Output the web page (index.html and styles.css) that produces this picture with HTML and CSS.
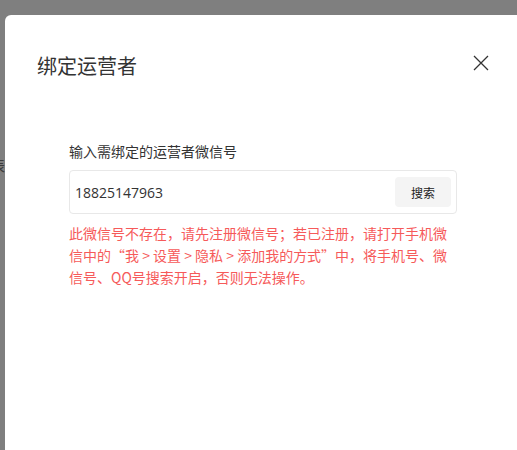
FILE: index.html
```html
<!DOCTYPE html>
<html>
  <head>
    <title>绑定运营者</title>
    <link rel="stylesheet" href="styles.css">
  </head>
  <body>
    <div class="page-edge">
      <span>列表</span>
    </div>

    <div class="modal">
      <div class="modal-header">
        <h2 class="modal-title">绑定运营者</h2>
        <button class="modal-close" aria-label="关闭">
          <svg width="16" height="16" viewBox="0 0 16 16">
            <path d="M1 1 L15 15 M15 1 L1 15" stroke="#333" stroke-width="1.3" fill="none"/>
          </svg>
        </button>
      </div>

      <div class="modal-body">
        <label class="field-label" for="wx-id">输入需绑定的运营者微信号</label>
        <div class="search-box">
          <input id="wx-id" class="search-input" type="text" value="18825147963">
          <button class="search-btn">搜索</button>
        </div>
        <p class="error-msg">此微信号不存在，请先注册微信号；若已注册，请打开手机微信中的“我 &gt; 设置 &gt; 隐私 &gt; 添加我的方式”中，将手机号、微信号、QQ号搜索开启，否则无法操作。</p>
      </div>
    </div>
  </body>
</html>
```

FILE: styles.css
```css
html, body {
  margin: 0;
  height: 100%;
  overflow: hidden;
}

body {
  display: flex;
  background: #7f7f7f;
  font-family: "Noto Sans CJK SC", "Noto Sans", sans-serif;
  color: #333;
}

/* page behind the mask, only a sliver shows */
.page-edge {
  width: 5px;
  flex: none;
  display: flex;
  justify-content: flex-end;
  overflow: hidden;
  padding-top: 155px;
  font-size: 14px;
  line-height: 20px;
  color: #3c3c3c;
  white-space: nowrap;
}

.modal {
  flex: none;
  width: 540px;
  margin-top: 15px;
  background: #fff;
  border-radius: 6px 6px 0 0;
}

.modal-header {
  display: flex;
  align-items: center;
  justify-content: space-between;
  width: 452px;
  padding: 37px 0 0 32px;
}

.modal-title {
  margin: 0;
  font-size: 20px;
  font-weight: normal;
  line-height: 28px;
  color: #333;
}

.modal-close {
  display: flex;
  padding: 0;
  margin-top: -6px;
  border: none;
  background: none;
  cursor: pointer;
}

.modal-body {
  padding: 61px 0 0 64px;
}

.field-label {
  display: block;
  font-size: 14px;
  line-height: 20px;
  color: #333;
}

.search-box {
  display: flex;
  align-items: center;
  width: 376px;
  margin-top: 9px;
  padding: 6px 5px;
  border: 1px solid #e8e8e8;
  border-radius: 4px;
}

.search-input {
  flex: 1;
  min-width: 0;
  padding: 0;
  border: none;
  outline: none;
  font-family: "Open Sans", "Noto Sans CJK SC", sans-serif;
  font-size: 14px;
  color: #333;
  background: transparent;
}

.search-btn {
  width: 56px;
  height: 30px;
  border: none;
  border-radius: 4px;
  background: #f4f4f4;
  font-family: inherit;
  font-size: 12px;
  color: #222;
  cursor: pointer;
}

.error-msg {
  width: 388px;
  margin: 8px 0 0;
  font-size: 14px;
  line-height: 22px;
  color: #f65a5a;
}
```
